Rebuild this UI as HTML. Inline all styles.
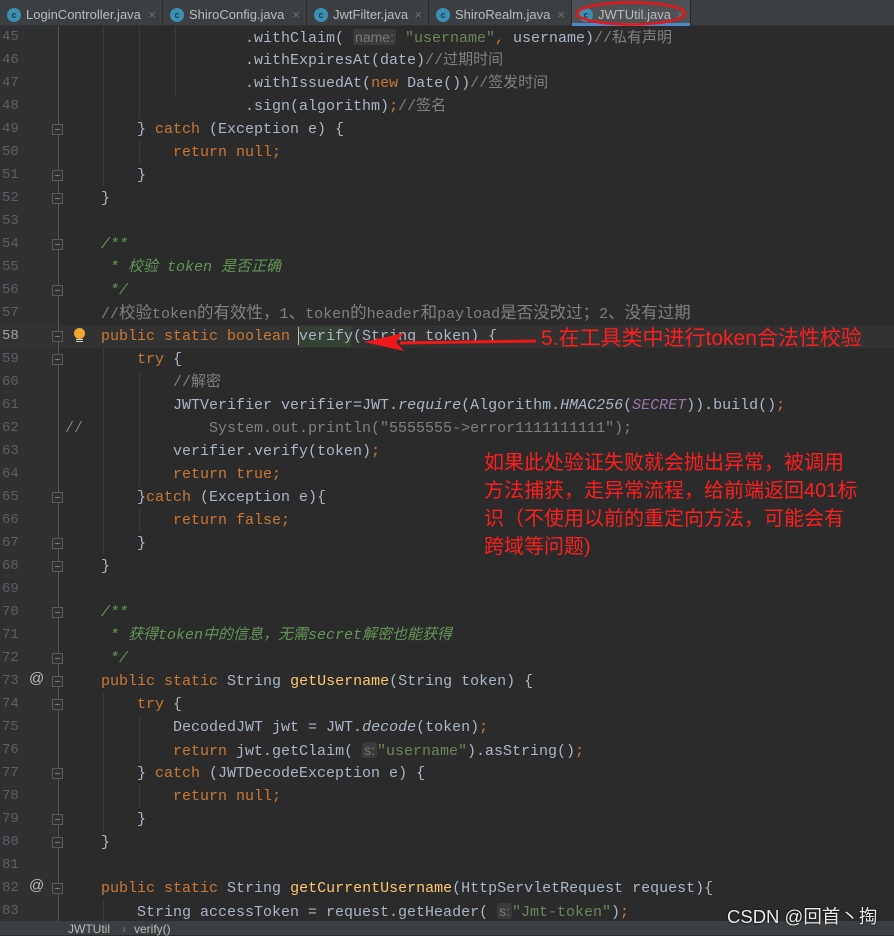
<!DOCTYPE html>
<html><head><meta charset="utf-8"><style>
*{margin:0;padding:0;box-sizing:border-box}
body{width:894px;height:935px;background:#2b2b2b;overflow:hidden;position:relative;font-family:"Liberation Mono","Noto Sans CJK SC",monospace}
.tabs{position:absolute;left:0;top:0;width:894px;height:26px;background:#3c3f41;border-bottom:1px solid #323232}
.tab{position:absolute;top:0;height:26px;border-right:1px solid #2b2b2b;font:13px "Liberation Sans","Noto Sans CJK SC",sans-serif;color:#bbbbbb;line-height:30px;padding-left:26px}
.tab i{position:absolute;left:7px;top:8px;width:14px;height:14px;border-radius:50%;background:#3d8eb0;color:#1d3e4c;font:bold 9px "Liberation Sans",sans-serif;font-style:normal;text-align:center;line-height:14px}
.tab b{position:absolute;right:6px;top:0;font-weight:normal;color:#6e6e6e;font-size:13px}
.gut{position:absolute;left:0;top:26px;width:59px;height:895px;background:#2f3032}
.vl{position:absolute;width:1px;background:#3b3b3b}
.ln{position:absolute;left:2px;width:40px;font:14px "Liberation Mono",monospace;color:#5d6063;line-height:23px;height:23px}
.row{position:absolute;left:65px;height:23px;line-height:23px;font-size:15px;color:#a9b7c6;white-space:pre}
.cj{font-size:16.5px}
.k{color:#cc7832}.s{color:#6a8759}.c{color:#808080}.d{color:#629755;font-style:italic}.m{color:#ffc66d}.it{font-style:italic}.p{color:#9876aa;font-style:italic}
.h{background:#3b3b3b;color:#787878;border-radius:3px;padding:0 2px;font-family:"Liberation Sans",sans-serif;font-size:14px}
.fold{position:absolute;left:52px;width:11px;height:11px;border:1px solid #5a5a5a;background:#2f3032}
.fold:after{content:"";position:absolute;left:2px;top:4px;width:5px;height:1px;background:#777}
.status{position:absolute;left:0;top:921px;width:894px;height:14px;background:#3c3f41;font:12px "Liberation Sans",sans-serif;color:#bbbbbb;line-height:14px}
.red{position:absolute;color:#ff1e1e;font-family:"Liberation Sans","Noto Sans CJK SC",sans-serif;font-size:20px}
</style></head><body>
<div class="tabs">
<div class="tab" style="left:0;width:163px"><i>c</i>LoginController.java<b>×</b></div>
<div class="tab" style="left:163px;width:144px"><i>c</i>ShiroConfig.java<b>×</b></div>
<div class="tab" style="left:307px;width:122px"><i>c</i>JwtFilter.java<b>×</b></div>
<div class="tab" style="left:429px;width:143px"><i>c</i>ShiroRealm.java<b>×</b></div>
<div class="tab" style="left:572px;width:119px;background:#4e5254"><i>c</i>JWTUtil.java<b>×</b><span style="position:absolute;left:0;right:0;bottom:0;height:3px;background:#4a88c7"></span></div>
</div>
<svg style="position:absolute;left:572px;top:0" width="120" height="28"><ellipse cx="59" cy="13.5" rx="54" ry="11" fill="none" stroke="#e8151b" stroke-width="2.5"/></svg>
<div class="gut"></div>
<div style="position:absolute;left:0;top:325px;width:894px;height:23px;background:#323232"></div>
<div class="vl" style="left:58px;top:26px;height:895px;background:#555"></div>
<div class="vl" style="left:103px;top:26px;height:160px"></div>
<div class="vl" style="left:139px;top:26px;height:92px"></div>
<div class="vl" style="left:175px;top:26px;height:70px"></div>
<div class="vl" style="left:139px;top:141px;height:23px"></div>
<div class="vl" style="left:103px;top:348px;height:207px"></div>
<div class="vl" style="left:139px;top:371px;height:115px"></div>
<div class="vl" style="left:139px;top:509px;height:23px"></div>
<div class="vl" style="left:103px;top:693px;height:138px"></div>
<div class="vl" style="left:139px;top:716px;height:46px"></div>
<div class="vl" style="left:139px;top:785px;height:23px"></div>
<div class="vl" style="left:103px;top:900px;height:21px"></div>
<div style="position:absolute;left:298px;top:326px;width:53px;height:21px;background:#344134"></div>
<div style="position:absolute;left:298px;top:327px;width:1px;height:18px;background:#bbb"></div>
<div id="code"></div>
<script>
var L=[
[45,'                    .withClaim( <span class="h">name:</span> <span class="s">"username"</span><span class="k">,</span> username)<span class="c">//私有声明</span>'],
[46,'                    .withExpiresAt(date)<span class="c">//过期时间</span>'],
[47,'                    .withIssuedAt(<span class="k">new</span> Date())<span class="c">//签发时间</span>'],
[48,'                    .sign(algorithm)<span class="k">;</span><span class="c">//签名</span>'],
[49,'        } <span class="k">catch</span> (Exception e) {',1],
[50,'            <span class="k">return null;</span>'],
[51,'        }',1],
[52,'    }',1],
[53,''],
[54,'    <span class="d">/**</span>',1],
[55,'    <span class="d"> * 校验 token 是否正确</span>'],
[56,'    <span class="d"> */</span>',1],
[57,'    <span class="c">//<span class="cj">校验</span>token<span class="cj">的有效性，</span>1<span class="cj">、</span>token<span class="cj">的</span>header<span class="cj">和</span>payload<span class="cj">是否没改过；</span>2<span class="cj">、没有过期</span></span>'],
[58,'    <span class="k">public static boolean</span> verify(String token) {',1],
[59,'        <span class="k">try</span> {',1],
[60,'            <span class="c">//解密</span>'],
[61,'            JWTVerifier verifier=JWT.<span class="it">require</span>(Algorithm.<span class="it">HMAC256</span>(<span class="p">SECRET</span>)).build()<span class="k">;</span>'],
[62,'<span class="c">//              System.out.println("5555555->error1111111111");</span>'],
[63,'            verifier.verify(token)<span class="k">;</span>'],
[64,'            <span class="k">return true;</span>'],
[65,'        }<span class="k">catch</span> (Exception e){',1],
[66,'            <span class="k">return false;</span>'],
[67,'        }',1],
[68,'    }',1],
[69,''],
[70,'    <span class="d">/**</span>',1],
[71,'    <span class="d"> * 获得token中的信息，无需secret解密也能获得</span>'],
[72,'    <span class="d"> */</span>',1],
[73,'    <span class="k">public static</span> String <span class="m">getUsername</span>(String token) {',1],
[74,'        <span class="k">try</span> {',1],
[75,'            DecodedJWT jwt = JWT.<span class="it">decode</span>(token)<span class="k">;</span>'],
[76,'            <span class="k">return</span> jwt.getClaim( <span class="h">s:</span><span class="s">"username"</span>).asString()<span class="k">;</span>'],
[77,'        } <span class="k">catch</span> (JWTDecodeException e) {',1],
[78,'            <span class="k">return null;</span>'],
[79,'        }',1],
[80,'    }',1],
[81,''],
[82,'    <span class="k">public static</span> String <span class="m">getCurrentUsername</span>(HttpServletRequest request){',1],
[83,'        String accessToken = request.getHeader( <span class="h">s:</span><span class="s">"Jmt-token"</span>)<span class="k">;</span>']
];
var h='';
L.forEach(function(l){var t=26+(l[0]-45)*23;
h+='<div class="ln" style="top:'+t+'px'+(l[0]==58?';color:#a4a3a3':'')+'">'+l[0]+'</div>';
if(l[2])h+='<div class="fold" style="top:'+(t+6)+'px"></div>';
h+='<div class="row" style="top:'+t+'px">'+l[1]+'</div>';});
document.getElementById('code').innerHTML=h;
</script>
<div style="position:absolute;left:74px;top:328px;width:11px;height:11px;border-radius:50%;background:#f0a732"></div>
<div style="position:absolute;left:76px;top:339px;width:7px;height:1px;background:#ccc"></div>
<div style="position:absolute;left:76px;top:341px;width:7px;height:1px;background:#ccc"></div>
<div style="position:absolute;left:29px;top:670px;color:#bbb;font:15px 'Liberation Sans',sans-serif">@</div>
<div style="position:absolute;left:29px;top:877px;color:#bbb;font:15px 'Liberation Sans',sans-serif">@</div>
<svg style="position:absolute;left:360px;top:330px" width="180" height="24"><path d="M176 11 L40 13" stroke="#f01818" stroke-width="3" fill="none"/><path d="M4 12 L44 3 L36 12 L44 21 Z" fill="#f01818"/></svg>
<div class="red" style="left:541px;top:325px;line-height:28px;font-size:21px">5.在工具类中进行token合法性校验</div>
<div class="red" style="left:484px;top:449px;width:410px;line-height:28px">如果此处验证失败就会抛出异常，被调用<br>方法捕获，走异常流程，给前端返回401标<br>识（不使用以前的重定向方法，可能会有<br>跨域等问题)</div>
<div class="status"><span style="position:absolute;left:68px;top:1px">JWTUtil</span><span style="position:absolute;left:122px;top:1px;color:#777">›</span><span style="position:absolute;left:134px;top:1px">verify()</span></div>
<div style="position:absolute;left:727px;top:903px;color:#e8e8e8;font:18.5px 'Liberation Sans','Noto Sans CJK SC',sans-serif;text-shadow:0 0 2px #000">CSDN @回首丶掏</div>
</body></html>
